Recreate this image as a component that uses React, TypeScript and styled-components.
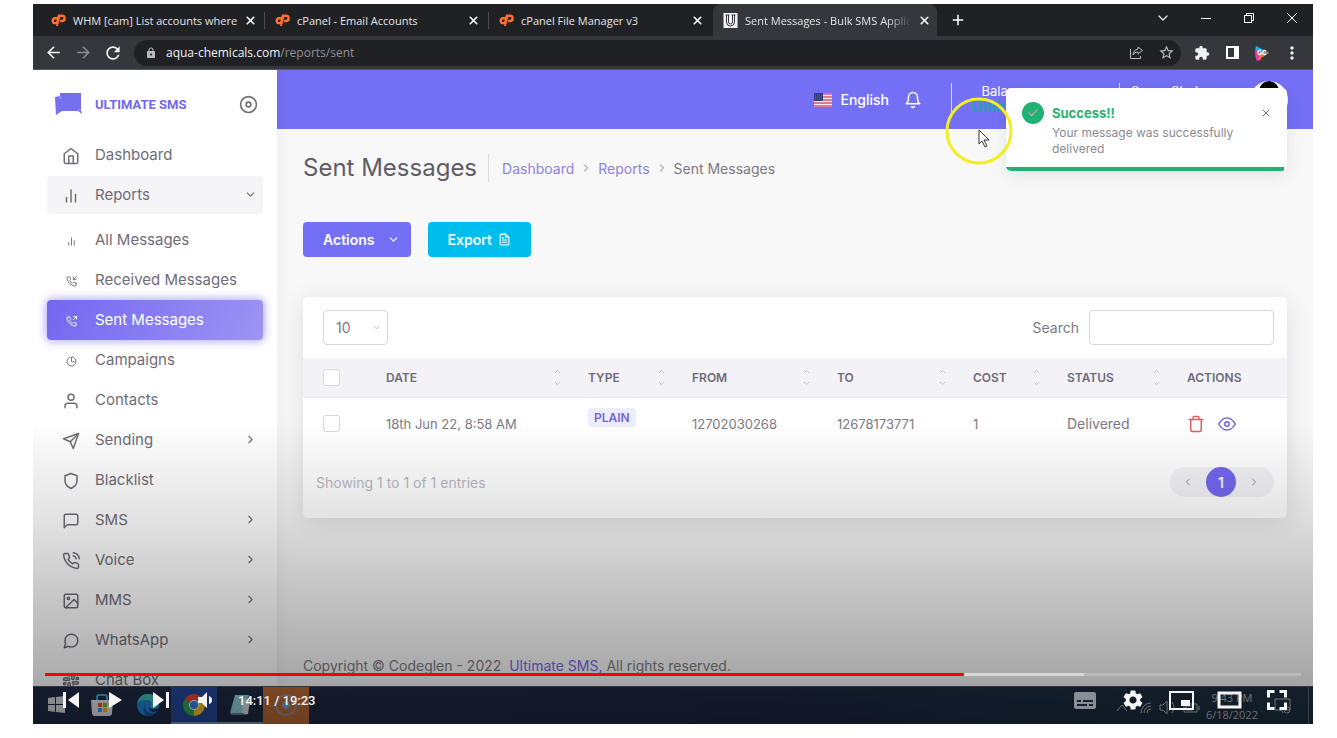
import React from "react";
import styled, { createGlobalStyle, css } from "styled-components";
import {
  FiHome, FiBarChart2, FiPhoneIncoming, FiPhoneOutgoing, FiPieChart, FiUser, FiSend, FiShield,
  FiMessageSquare, FiPhoneCall, FiImage, FiMessageCircle, FiSlack, FiTrash, FiEye, FiBell,
  FiFileText, FiDisc, FiCheck, FiX, FiChevronDown, FiChevronRight, FiChevronLeft, FiChevronUp,
} from "react-icons/fi";
import { MdExtension, MdLock, MdArrowBack, MdArrowForward, MdRefresh, MdMoreVert, MdStarBorder, MdAdd, MdSettings } from "react-icons/md";
import type { IconType } from "react-icons";

const Global = createGlobalStyle`
  *, *::before, *::after { box-sizing: border-box; }
  body { margin: 0; background: #fff; font-family: Inter, "Liberation Sans", sans-serif; }
  button, input, select { font: inherit; color: inherit; }
  button { border: 0; background: none; padding: 0; cursor: pointer; }
  a { color: inherit; text-decoration: none; }
  h1, p, ul, ol { margin: 0; padding: 0; }
  ul, ol { list-style: none; }
`;

const Screen = styled.div`
  height: 100vh;
  padding: 4px 24px 14px 33px;
`;
const Video = styled.div`
  position: relative;
  height: 100%;
  min-height: 480px;
  display: flex;
  flex-direction: column;
  overflow: hidden;
`;

/* Browser chrome */
const TabBar = styled.div`
  flex: none;
  height: 32px;
  padding-left: 8px;
  display: flex;
  background: #202124;
  color: #e4e5e8;
  font: 11px "Open Sans", "Noto Sans", sans-serif;
`;
const Tab = styled.div<{ $active?: boolean; $line?: boolean }>`
  width: 224px;
  padding: 0 9px 0 10px;
  display: flex;
  align-items: center;
  gap: 7px;
  position: relative;
  ${p => p.$active && css`background: #36373c; border-radius: 8px 8px 0 0;`}
  ${p => p.$line && css`&::after { content: ""; position: absolute; right: 0; top: 8px; width: 1px; height: 17px; background: #4c4d52; }`}
  > svg { flex: none; }
`;
const TabTitle = styled.span<{ $fade: boolean }>`
  flex: 1;
  white-space: nowrap;
  ${p => p.$fade && css`mask-image: linear-gradient(to right, #000 86%, transparent);`}
`;
const CloseTab = styled.button`
  display: flex;
  color: #fff;
`;
const NewTab = styled.button`
  width: 42px;
  display: grid;
  place-items: center;
  color: #fff;
`;
const WindowButtons = styled.div`
  margin-left: auto;
  display: flex;
  height: 27px;
`;
const WindowButton = styled.button`
  width: 43px;
  display: grid;
  place-items: center;
`;
const ToolBar = styled.div`
  flex: none;
  height: 34px;
  padding: 0 6px 0 5px;
  display: flex;
  align-items: center;
  background: #36373c;
  border-bottom: 1px solid #55556a;
  color: #f1f1f3;
`;
const ToolButton = styled.button<{ $dim?: boolean }>`
  width: 30px;
  height: 26px;
  display: grid;
  place-items: center;
  color: ${p => (p.$dim ? "#8a8b8f" : "inherit")};
`;
const AddressBar = styled.div`
  flex: 1;
  height: 26px;
  margin: 0 6px;
  padding-left: 11px;
  display: flex;
  align-items: center;
  border-radius: 13px;
  background: #202124;
  color: #b9babd;
`;
const Address = styled.div`
  flex: 1;
  margin-left: 9px;
  font: 12px "Open Sans", "Noto Sans", sans-serif;
  color: #8f9094;
  b { font-weight: 400; color: #f1f1f3; }
`;

/* Application */
const Page = styled.div`
  flex: 1;
  min-height: 0;
  position: relative;
  display: flex;
  overflow: hidden;
  background: #f8f8f8;
  color: #7c7a84;
`;
const Sidebar = styled.nav`
  flex: none;
  width: 244px;
  overflow: hidden;
  background: #fff;
  box-shadow: 0 0 15px rgba(34, 41, 47, 0.07);
  z-index: 1;
`;
const Brand = styled.div`
  height: 65px;
  padding: 3px 19px 0 21px;
  display: flex;
  align-items: center;
  color: #7367f0;
  font: 700 13px Roboto, sans-serif;
  a { flex: 1; margin-left: 12px; }
  button { display: flex; color: #6e6b7b; }
`;
const Menu = styled.ul`
  padding: 1px 14px;
  display: flex;
  flex-direction: column;
  gap: 2px;
`;
const SubMenu = styled.ul`
  padding-top: 5px;
  display: flex;
  flex-direction: column;
  gap: 2px;
`;
const itemState = {
  open: css`
    background: #f5f4f7;
  `,
  active: css`
    height: 40px;
    margin: -1px 0;
    background: linear-gradient(118deg, #7367f0, rgba(115, 103, 240, 0.7));
    box-shadow: 0 0 10px 1px rgba(115, 103, 240, 0.6);
    color: #fff;
  `,
};
const ItemLink = styled.a<{ $state?: "open" | "active" }>`
  height: 38px;
  padding: 0 6px 1px 0;
  display: flex;
  align-items: center;
  border-radius: 4px;
  font-size: 15px;
  color: #6f6d77;
  ${p => p.$state && itemState[p.$state]}
  span { flex: 1; white-space: nowrap; }
`;
const ItemIcon = styled.i`
  width: 48px;
  padding-top: 3px;
  display: grid;
  place-items: center;
`;

const Main = styled.main`
  flex: 1;
  min-width: 0;
  display: flex;
  flex-direction: column;
`;
const TopBar = styled.header`
  flex: none;
  height: 59px;
  padding: 0 25px;
  display: flex;
  justify-content: flex-end;
  align-items: center;
  background: #7470f5;
  color: #fff;
  font-size: 14px;
`;
const Language = styled.a`
  margin: 0 15px 0 8px;
  font-weight: 500;
`;
const Alerts = styled.button`
  display: flex;
  margin-right: 29px;
`;
const Account = styled.div<{ $width: number }>`
  width: ${p => p.$width}px;
  height: 34px;
  padding-left: 11px;
  border-left: 1px solid rgba(255, 255, 255, 0.75);
  line-height: 16px;
  font-size: 13px;
`;
const Balance = styled.div`
  width: 86px;
  text-align: center;
  b { display: block; font-weight: 700; color: #28a0b4; font-size: 15px; }
`;
const Avatar = styled.div`
  width: 38px;
  height: 38px;
  border-radius: 50%;
  overflow: hidden;
  background: #fff;
  svg { display: block; }
`;

const Content = styled.div`
  flex: 1;
  padding: 24px 26px 0;
`;
const TitleRow = styled.div`
  height: 30px;
  margin-bottom: 39px;
  display: flex;
  align-items: center;
`;
const Title = styled.h1`
  padding-right: 11px;
  border-right: 1px solid #d6dce1;
  font-size: 24px;
  line-height: 28px;
  font-weight: 400;
  color: #5e5c66;
`;
const Crumbs = styled.ol`
  padding-left: 13px;
  display: flex;
  align-items: center;
  gap: 6px;
  font-size: 14px;
  a { color: #8f83dd; }
  li { display: flex; align-items: center; gap: 6px; }
`;
const ButtonRow = styled.div`
  display: flex;
  gap: 17px;
  margin-bottom: 40px;
`;
const Button = styled.button<{ $tone: string }>`
  height: 35px;
  padding: 0 20px;
  display: flex;
  align-items: center;
  gap: 6px;
  border-radius: 4px;
  background: ${p => p.$tone};
  color: #fff;
  font-size: 14px;
  font-weight: 600;
`;
const DropButton = styled(Button)`
  padding-right: 11px;
  gap: 12px;
`;
const Card = styled.section`
  border-radius: 5px;
  background: #fff;
  box-shadow: 0 4px 24px rgba(34, 41, 47, 0.12);
  font-size: 14px;
`;
const Filters = styled.div`
  height: 61px;
  padding: 0 13px 0 20px;
  display: flex;
  justify-content: space-between;
  align-items: center;
  label { display: flex; align-items: center; gap: 10px; }
`;
const PageSize = styled.div`
  display: grid;
  grid-template-columns: 65px;
  align-items: center;
  > * { grid-area: 1 / 1; }
  > svg { justify-self: end; margin-right: 6px; color: #b9b8be; pointer-events: none; }
`;
const Select = styled.select`
  height: 35px;
  padding: 0 12px;
  appearance: none;
  border: 1px solid #d8d6de;
  border-radius: 4px;
  background: #fff;
`;
const SearchBox = styled.input`
  width: 185px;
  height: 35px;
  padding: 0 12px;
  border: 1px solid #d8d6de;
  border-radius: 4px;
  background: #fff;
`;
const Table = styled.table`
  width: 100%;
  table-layout: fixed;
  border-collapse: collapse;
  text-align: left;
  th, td { padding: 0 6px 0 20px; white-space: nowrap; }
  th {
    height: 39px;
    background: #f3f2f7;
    border-bottom: 1px solid #ebe9f1;
    font-size: 12px;
    font-weight: 600;
    color: #6e6b7b;
  }
  td { height: 53px; font-size: 13px; }
  th > div, td > div { display: flex; align-items: center; }
  th > div { justify-content: space-between; }
`;
const StatusCell = styled.td`
  && { font-size: 14px; }
`;
const Check = styled.input`
  display: block;
  width: 17px;
  height: 17px;
  margin: 0;
  appearance: none;
  border: 1px solid #d8d6de;
  border-radius: 3px;
  background: #fff;
`;
const Sort = styled.button`
  display: grid;
  gap: 3px;
  color: #aba9b5;
`;
const Badge = styled.span`
  margin-bottom: 12px;
  padding: 0 6px;
  border-radius: 4px;
  background: #eeedfd;
  color: #7367d8;
  font-size: 12px;
  line-height: 19px;
  font-weight: 600;
`;
const IconButton = styled.button<{ $color: string }>`
  display: flex;
  margin-right: 13px;
  color: ${p => p.$color};
`;
const CardFoot = styled.div`
  height: 68px;
  padding: 0 13px 4px;
  display: flex;
  justify-content: space-between;
  align-items: center;
  color: #b9b9c3;
`;
const Pager = styled.div`
  display: flex;
  padding-right: 2px;
  border-radius: 15px;
  background: #f3f2f7;
  color: #8f8d98;
`;
const PagerButton = styled.button<{ $current?: boolean }>`
  width: ${p => (p.$current ? 30 : 36)}px;
  height: 30px;
  display: grid;
  place-items: center;
  ${p => p.$current && css`border-radius: 50%; background: #7367f0; color: #fff; font-weight: 600;`}
`;
const Footer = styled.footer`
  padding: 0 26px 11px;
  font-size: 14px;
  line-height: 18px;
  a { color: #7367f0; }
`;

const Toast = styled.div`
  position: absolute;
  top: 18px;
  right: 26px;
  width: 281px;
  height: 83px;
  padding: 14px 15px 0 16px;
  display: flex;
  gap: 8px;
  overflow: hidden;
  border-radius: 5px;
  background: #fff;
  box-shadow: 0 4px 16px rgba(34, 41, 47, 0.1);
  font-size: 12px;
  line-height: 16px;
  z-index: 2;
  &::after { content: ""; position: absolute; left: 0; right: 3px; bottom: 0; height: 4px; background: #24b075; }
  strong { display: block; margin-bottom: 1px; font-size: 13px; line-height: 22px; font-weight: 700; color: #28b46e; }
  p { flex: 1; color: #8b8992; }
  > button { display: flex; height: 22px; align-items: center; color: #6e6b7b; }
`;
const ToastIcon = styled.i`
  width: 22px;
  height: 22px;
  display: grid;
  place-items: center;
  border-radius: 50%;
  background: #24b075;
  color: #fff;
`;
const Pointer = styled.svg`
  position: absolute;
  right: 299px;
  top: 26px;
  z-index: 3;
`;

/* Desktop task bar */
const TaskBar = styled.div`
  flex: none;
  height: 38px;
  display: flex;
  background: linear-gradient(to right, #1e2a44, #1a2640 60%, #1c3040);
  border-top: 1px solid #4a5260;
`;
const Task = styled.div<{ $fill?: string; $run?: boolean }>`
  width: 46px;
  display: grid;
  place-items: center;
  background: ${p => p.$fill || "none"};
  border-bottom: 2px solid ${p => (p.$run ? "#7d93b8" : "transparent")};
`;
const Tray = styled.div`
  margin-left: auto;
  display: flex;
  align-items: center;
  color: #b4b7bd;
  font: 11px/17px "Open Sans", "Noto Sans", sans-serif;
  text-align: center;
  svg { display: block; }
`;
const Clock = styled.div`
  margin: 0 16px 0 1px;
`;
const ShowDesktop = styled.div`
  width: 5px;
  height: 100%;
  margin-left: 16px;
  border-left: 1px solid #5a6472;
`;

/* Video player overlay */
const Overlay = styled.div`
  position: absolute;
  inset: auto 0 0;
  height: 304px;
  display: flex;
  flex-direction: column;
  justify-content: flex-end;
  background: linear-gradient(to bottom, transparent, rgba(0, 0, 0, 0.11) 32%, rgba(0, 0, 0, 0.22) 58%, rgba(0, 0, 0, 0.33) 86%, rgba(0, 0, 0, 0.42));
  z-index: 4;
`;
const Track = styled.div`
  height: 3px;
  margin: 0 12px;
  display: flex;
  background: rgba(255, 255, 255, 0.2);
`;
const TrackPart = styled.div`
  background: #d8d8d8;
  &:first-child { background: #f00; }
`;
const Controls = styled.div`
  height: 48px;
  padding: 0 12px 0 15px;
  display: flex;
  align-items: center;
  color: #f4f4f4;
  font: 500 13px Roboto, sans-serif;
`;
const Control = styled.button<{ $wide?: boolean; $dim?: boolean }>`
  width: ${p => (p.$wide ? 48 : 45)}px;
  height: 40px;
  display: grid;
  place-items: center;
  opacity: ${p => (p.$dim ? 0.5 : 1)};
`;
const Time = styled.span`
  margin: 0 auto 0 10px;
`;

type Entry = { icon: IconType; label: string; arrow?: boolean };
const topItems: Entry[] = [
  { icon: FiUser, label: "Contacts" },
  { icon: FiSend, label: "Sending", arrow: true },
  { icon: FiShield, label: "Blacklist" },
  { icon: FiMessageSquare, label: "SMS", arrow: true },
  { icon: FiPhoneCall, label: "Voice", arrow: true },
  { icon: FiImage, label: "MMS", arrow: true },
  { icon: FiMessageCircle, label: "WhatsApp", arrow: true },
  { icon: FiSlack, label: "Chat Box" },
];
const reportItems: Entry[] = [
  { icon: FiBarChart2, label: "All Messages" },
  { icon: FiPhoneIncoming, label: "Received Messages" },
  { icon: FiPhoneOutgoing, label: "Sent Messages" },
  { icon: FiPieChart, label: "Campaigns" },
];
const columns = [
  { name: "Date", width: 202 }, { name: "Type", width: 104 }, { name: "From", width: 145 },
  { name: "To", width: 136 }, { name: "Cost", width: 94 }, { name: "Status", width: 120 },
];

function ItemRow({ item, sub, state }: { item: Entry; sub?: boolean; state?: "open" | "active" }) {
  const Icon = item.icon;
  return (
    <ItemLink href="#" $state={state}>
      <ItemIcon><Icon size={sub ? 11 : 18} /></ItemIcon>
      <span>{item.label}</span>
      {state === "open" && <FiChevronDown size={13} />}
      {item.arrow && <FiChevronRight size={13} />}
    </ItemLink>
  );
}

function CpanelMark() {
  return (
    <svg width="15" height="13" viewBox="0 0 15 13" fill="none" stroke="#ff7030" strokeWidth="2.400">
      <path d="M6.500 4.200H4.200a2.300 2.300 0 0 0 0 4.900h1.900L8 1.800h3a2.500 2.500 0 0 1 0 5.200H9" />
      <path d="M8.300 2L6 12" strokeWidth="2" />
    </svg>
  );
}

function BrowserTab({ title, active, line, fade = false }: { title: string; active?: boolean; line?: boolean; fade?: boolean }) {
  return (
    <Tab $active={active} $line={line}>
      {active ? (
        <svg width="15" height="15" viewBox="0 0 14 15">
          <path d="M0 0h14v15H0z" fill="#f4f4f6" />
          <path d="M2 2h4M8 2h4M3 2v7a4 4 0 0 0 8 0V2M5 2v7a2 2 0 0 0 4 0V2" fill="none" stroke="#33353f" />
        </svg>
      ) : <CpanelMark />}
      <TabTitle $fade={fade}>{title}</TabTitle>
      <CloseTab aria-label="Close tab"><FiX size={13} strokeWidth={3} /></CloseTab>
    </Tab>
  );
}

function Chrome() {
  return (
    <>
      <TabBar>
        <BrowserTab title="WHM [cam] List accounts where" line />
        <BrowserTab title="cPanel - Email Accounts" line />
        <BrowserTab title="cPanel File Manager v3" />
        <BrowserTab title="Sent Messages - Bulk SMS Applic" active fade />
        <NewTab aria-label="New tab"><MdAdd size={18} /></NewTab>
        <WindowButtons>
          <WindowButton aria-label="Search tabs"><FiChevronDown size={16} strokeWidth={2} /></WindowButton>
          <WindowButton aria-label="Minimize"><svg width="10" height="10"><path d="M0 5.500h10" stroke="#fff" /></svg></WindowButton>
          <WindowButton aria-label="Restore">
            <svg width="10" height="10" fill="none" stroke="#fff"><path d="M.5 2.500h7v7h-7zM2.500 2.500v-2h7v7h-2" /></svg>
          </WindowButton>
          <WindowButton aria-label="Close"><svg width="10" height="10"><path d="M0 0l10 10M10 0L0 10" stroke="#fff" /></svg></WindowButton>
        </WindowButtons>
      </TabBar>
      <ToolBar>
        <ToolButton aria-label="Back"><MdArrowBack size={19} /></ToolButton>
        <ToolButton aria-label="Forward" $dim><MdArrowForward size={19} /></ToolButton>
        <ToolButton aria-label="Reload"><MdRefresh size={20} /></ToolButton>
        <AddressBar>
          <MdLock size={12} />
          <Address><b>aqua-chemicals.com</b>/reports/sent</Address>
          <ToolButton aria-label="Share">
            <svg width="15" height="15" viewBox="0 0 15 15" fill="none" stroke="currentColor">
              <path d="M1.500 4v9.500h10V11M9 2l4.500 3.500L9 9V7C6.500 7 5 8 4 10c.3-3.500 2-5.500 5-6z" />
            </svg>
          </ToolButton>
          <ToolButton aria-label="Bookmark"><MdStarBorder size={17} /></ToolButton>
        </AddressBar>
        <ToolButton aria-label="Extensions"><MdExtension size={16} /></ToolButton>
        <ToolButton aria-label="Side panel">
          <svg width="13" height="13"><path d="M1 1h11v11H1z" fill="none" stroke="#fff" strokeWidth="2" /><path d="M8 1h4v11H8z" fill="#fff" /></svg>
        </ToolButton>
        <ToolButton aria-label="Profile">
          <svg width="16" height="16" viewBox="0 0 16 16">
            <path d="M2 1L14 7 8 10 1 6z" fill="#1fb1e8" />
            <path d="M1 5l7 2-1 8-4 1q-2-3-2-11z" fill="#e93aa6" />
            <path d="M15 8L4 15l2-6 8-2z" fill="#f7762d" />
            <path d="M7 6a2 2 0 1 0 0 3V8H6M12 6a2 2 0 1 0 0 3" fill="none" stroke="#fff" strokeWidth="1.300" />
          </svg>
        </ToolButton>
        <ToolButton aria-label="Menu"><MdMoreVert size={20} /></ToolButton>
      </ToolBar>
    </>
  );
}

function SideNav() {
  return (
    <Sidebar>
      <Brand>
        <svg width="29" height="24" viewBox="0 0 29 24" fill="#7470f0">
          <path d="M1 5l5-1V1h21v17l1 4-4-3H8l-6 4z" />
          <path d="M6 4v3M24 18h3" stroke="#a9a4f8" />
        </svg>
        <a href="#">ULTIMATE SMS</a>
        <button aria-label="Collapse menu"><FiDisc size={19} strokeWidth={2} /></button>
      </Brand>
      <Menu>
        <li><ItemRow item={{ icon: FiHome, label: "Dashboard" }} /></li>
        <li>
          <ItemRow item={{ icon: FiBarChart2, label: "Reports" }} state="open" />
        </li>
        <li>
          <SubMenu>
            {reportItems.map(i => (
              <li key={i.label}><ItemRow item={i} sub state={i.label === "Sent Messages" ? "active" : undefined} /></li>
            ))}
          </SubMenu>
        </li>
        {topItems.map(i => <li key={i.label}><ItemRow item={i} /></li>)}
      </Menu>
    </Sidebar>
  );
}

function MessageTable() {
  return (
    <Card>
      <Filters>
        <PageSize>
          <Select aria-label="Entries per page" defaultValue="10"><option>10</option><option>25</option></Select>
          <FiChevronDown size={11} />
        </PageSize>
        <label>Search<SearchBox type="search" /></label>
      </Filters>
      <Table>
        <colgroup>
          <col width="63" />
          {columns.map(c => <col key={c.name} width={c.width} />)}
          <col width="120" />
        </colgroup>
        <thead>
          <tr>
            <th><Check type="checkbox" aria-label="Select all" /></th>
            {columns.map(c => (
              <th key={c.name}>
                <div>
                  {c.name.toUpperCase()}
                  <Sort aria-label={"Sort by " + c.name}><FiChevronUp size={9} /><FiChevronDown size={9} /></Sort>
                </div>
              </th>
            ))}
            <th>ACTIONS</th>
          </tr>
        </thead>
        <tbody>
          <tr>
            <td><Check type="checkbox" aria-label="Select message" /></td>
            <td>18th Jun 22, 8:58 AM</td>
            <td><div><Badge>PLAIN</Badge></div></td>
            <td>12702030268</td>
            <td>12678173771</td>
            <td>1</td>
            <StatusCell>Delivered</StatusCell>
            <td>
              <div>
                <IconButton $color="#e0605c" aria-label="Delete"><FiTrash size={18} /></IconButton>
                <IconButton $color="#7367d8" aria-label="View"><FiEye size={18} /></IconButton>
              </div>
            </td>
          </tr>
        </tbody>
      </Table>
      <CardFoot>
        <span>Showing 1 to 1 of 1 entries</span>
        <Pager>
          <PagerButton aria-label="Previous page"><FiChevronLeft size={12} /></PagerButton>
          <PagerButton $current>1</PagerButton>
          <PagerButton aria-label="Next page"><FiChevronRight size={12} /></PagerButton>
        </Pager>
      </CardFoot>
    </Card>
  );
}

function Flag() {
  return (
    <svg width="18" height="14" viewBox="0 0 18 14">
      <path d="M0 0h18v14H0z" fill="#f3e6ee" />
      <path d="M0 1h18M0 4h18M0 7h18M0 10h18M0 13h18" stroke="#cf5873" strokeWidth="1.500" />
      <path d="M0 0h9v8H0z" fill="#343f78" />
      <path d="M1 2h7M1 4h7M1 6h7" stroke="#5f699c" strokeDasharray="1 1" />
    </svg>
  );
}

function Tasks() {
  return (
    <TaskBar>
      <Task><svg width="17" height="17" fill="#d6dae0"><path d="M0 2l7-1v7H0zM8 1l9-1v8H8zM0 9h7v7l-7-1zM8 9h9v8l-9-1z" /></svg></Task>
      <Task>
        <svg width="22" height="22" viewBox="0 0 22 22">
          <path d="M6 7V3q0-2 2-2h6q2 0 2 2v4" fill="none" stroke="#35a6e0" strokeWidth="2" />
          <path d="M0 6h22l-1 13q0 3-3 3H4q-3 0-3-3z" fill="#e6e6ea" />
          <path d="M7 9h4v4H7z" fill="#f0512c" /><path d="M12 9h4v4h-4z" fill="#7cba24" />
          <path d="M7 14h4v4H7z" fill="#2aa3ee" /><path d="M12 14h4v4h-4z" fill="#fdb813" />
        </svg>
      </Task>
      <Task>
        <svg width="24" height="24" viewBox="0 0 24 24">
          <circle cx="12" cy="12" r="11" fill="#1f86d4" />
          <path d="M1 11C2 4 7 1 12 1c7 0 11 5 11 9 0 3-3 5-6 5-2 0-3-1-2-2 2-4-1-6-4-6-5 0-9 1-10 4z" fill="#3cc0b4" />
          <path d="M10 9c-3 4-1 10 5 11 3 0 5-1 6-2-2 3-5 5-9 5-5-1-6-9-2-14z" fill="#145a9e" />
          <path d="M13 14c1 3 6 3 9 1l-1 3c-4 2-8 0-8-4z" fill="#1a2640" />
        </svg>
      </Task>
      <Task $fill="#24499a" $run>
        <svg width="22" height="22" viewBox="0 0 22 22">
          <path d="M11 11L1.500 5.500A11 11 0 0 1 20.500 5.500z" fill="#e8453c" />
          <path d="M11 11l9.500-5.500A11 11 0 0 1 11 22z" fill="#fbc116" />
          <path d="M11 11v11A11 11 0 0 1 1.500 5.500z" fill="#31a853" />
          <circle cx="11" cy="11" r="5" fill="#fff" /><circle cx="11" cy="11" r="4" fill="#3b7ded" />
        </svg>
      </Task>
      <Task $run>
        <svg width="22" height="22" viewBox="0 0 22 22">
          <path d="M6 1h14l-5 18H1z" fill="#8fd0da" /><path d="M14 5l7 1-2 14-6 1z" fill="#d9e2e4" /><path d="M1 19h14l1 2H2z" fill="#56808c" />
        </svg>
      </Task>
      <Task $fill="#bb6a35">
        <svg width="24" height="24" viewBox="0 0 24 24" fill="none">
          <circle cx="12" cy="12" r="10" stroke="#8e8f98" strokeWidth="2" /><circle cx="12" cy="12" r="4" fill="#7c9fd0" />
        </svg>
      </Task>
      <Tray>
        <svg width="90" height="20" viewBox="0 0 90 20" fill="none" stroke="currentColor">
          <path d="M2 15l5-6 5 6M26 17a10 10 0 0 1 10-10M29 17a7 7 0 0 1 7-7M32 17a4 4 0 0 1 4-4" />
          <path d="M45 9v5h3l4 4V5l-4 4zM54 8q3 3 0 7M57 6q4 5 0 11M69 8h13v8H69zM71 10h7v4h-7zM84 10v4" />
        </svg>
        <Clock>9:43 PM<br />6/18/2022</Clock>
        <svg width="18" height="18" viewBox="0 0 18 18" fill="none" stroke="currentColor">
          <path d="M1 2h15v11h-5M1 2v11h4" /><circle cx="13" cy="13" r="3" /><path d="M5 13q4 0 4 3" />
        </svg>
        <ShowDesktop />
      </Tray>
    </TaskBar>
  );
}

function Player() {
  return (
    <Overlay>
      <Track>
        <TrackPart style={{ width: "73.2%" }} />
        <TrackPart style={{ width: "9.5%" }} />
      </Track>
      <Controls>
        <Control aria-label="Previous"><svg width="16" height="16" fill="currentColor"><path d="M0 0h3v16H0zM16 0v16L5 8z" /></svg></Control>
        <Control aria-label="Play"><svg width="13" height="16" fill="currentColor"><path d="M0 0l13 8-13 8z" /></svg></Control>
        <Control aria-label="Next"><svg width="16" height="16" fill="currentColor"><path d="M13 0h3v16h-3zM0 0v16l11-8z" /></svg></Control>
        <Control aria-label="Mute">
          <svg width="15" height="16" viewBox="0 0 15 16" fill="currentColor"><path d="M0 5v6h4l5 5V0L4 5zM11 4v8q3-1 3-4t-3-4z" /></svg>
        </Control>
        <Time>14:11 / 19:23</Time>
        <Control $wide $dim aria-label="Subtitles">
          <svg width="22" height="17" viewBox="0 0 22 17"><rect width="22" height="17" rx="2" fill="#fff" /><path d="M3 9h4M9 9h10M3 13h10M15 13h4" stroke="#1c2538" strokeWidth="2" /></svg>
        </Control>
        <Control $wide aria-label="Settings"><MdSettings size={24} /></Control>
        <Control $wide aria-label="Miniplayer">
          <svg width="25" height="19"><path d="M1 1h23v17H1z" fill="none" stroke="currentColor" strokeWidth="2" /><path d="M12 9h9v6h-9z" fill="currentColor" /></svg>
        </Control>
        <Control $wide aria-label="Theater mode">
          <svg width="25" height="18"><path d="M2 2h21v14H2z" fill="none" stroke="currentColor" strokeWidth="3" /></svg>
        </Control>
        <Control $wide aria-label="Full screen">
          <svg width="20" height="20" fill="none" stroke="currentColor" strokeWidth="3"><path d="M1.500 7.500v-6h6M12.500 1.500h6v6M18.500 12.500v6h-6M7.500 18.500h-6v-6" /></svg>
        </Control>
      </Controls>
    </Overlay>
  );
}

export default function App() {
  return (
    <Screen>
      <Global />
      <Video>
        <Chrome />
        <Page>
          <SideNav />
          <Main>
            <TopBar>
              <Flag />
              <Language href="#">English</Language>
              <Alerts aria-label="Notifications"><FiBell size={18} /></Alerts>
              <Account $width={168}>
                <Balance>Balance<b>Unlimited</b></Balance>
              </Account>
              <Account $width={131}>Super Shola</Account>
              <Avatar>
                <svg width="38" height="38"><circle cx="19" cy="10" r="10" fill="#000" /><path d="M3 38q0-14 16-14t16 14" fill="#000" /></svg>
              </Avatar>
            </TopBar>
            <Content>
              <TitleRow>
                <Title>Sent Messages</Title>
                <Crumbs>
                  <li><a href="#">Dashboard</a><FiChevronRight size={12} /></li>
                  <li><a href="#">Reports</a><FiChevronRight size={12} /></li>
                  <li>Sent Messages</li>
                </Crumbs>
              </TitleRow>
              <ButtonRow>
                <DropButton $tone="#7470f5">Actions<FiChevronDown size={13} /></DropButton>
                <Button $tone="#00bdf0">Export<FiFileText size={13} /></Button>
              </ButtonRow>
              <MessageTable />
            </Content>
            <Footer>Copyright © Codeglen - 2022&nbsp; <a href="#">Ultimate SMS,</a> All rights reserved.</Footer>
          </Main>
          <Toast role="alert">
            <ToastIcon><FiCheck size={12} /></ToastIcon>
            <p><strong>Success!!</strong>Your message was successfully delivered</p>
            <button aria-label="Dismiss"><FiX size={12} /></button>
          </Toast>
          <Pointer width="70" height="70" viewBox="0 0 70 70" fill="none">
            <circle cx="35" cy="35" r="32" stroke="#f2ee22" strokeWidth="3" />
            <path d="M35 34v14l3-3 3 6 2-1-3-6h5z" fill="#fff" stroke="#333" />
          </Pointer>
        </Page>
        <Tasks />
        <Player />
      </Video>
    </Screen>
  );
}
